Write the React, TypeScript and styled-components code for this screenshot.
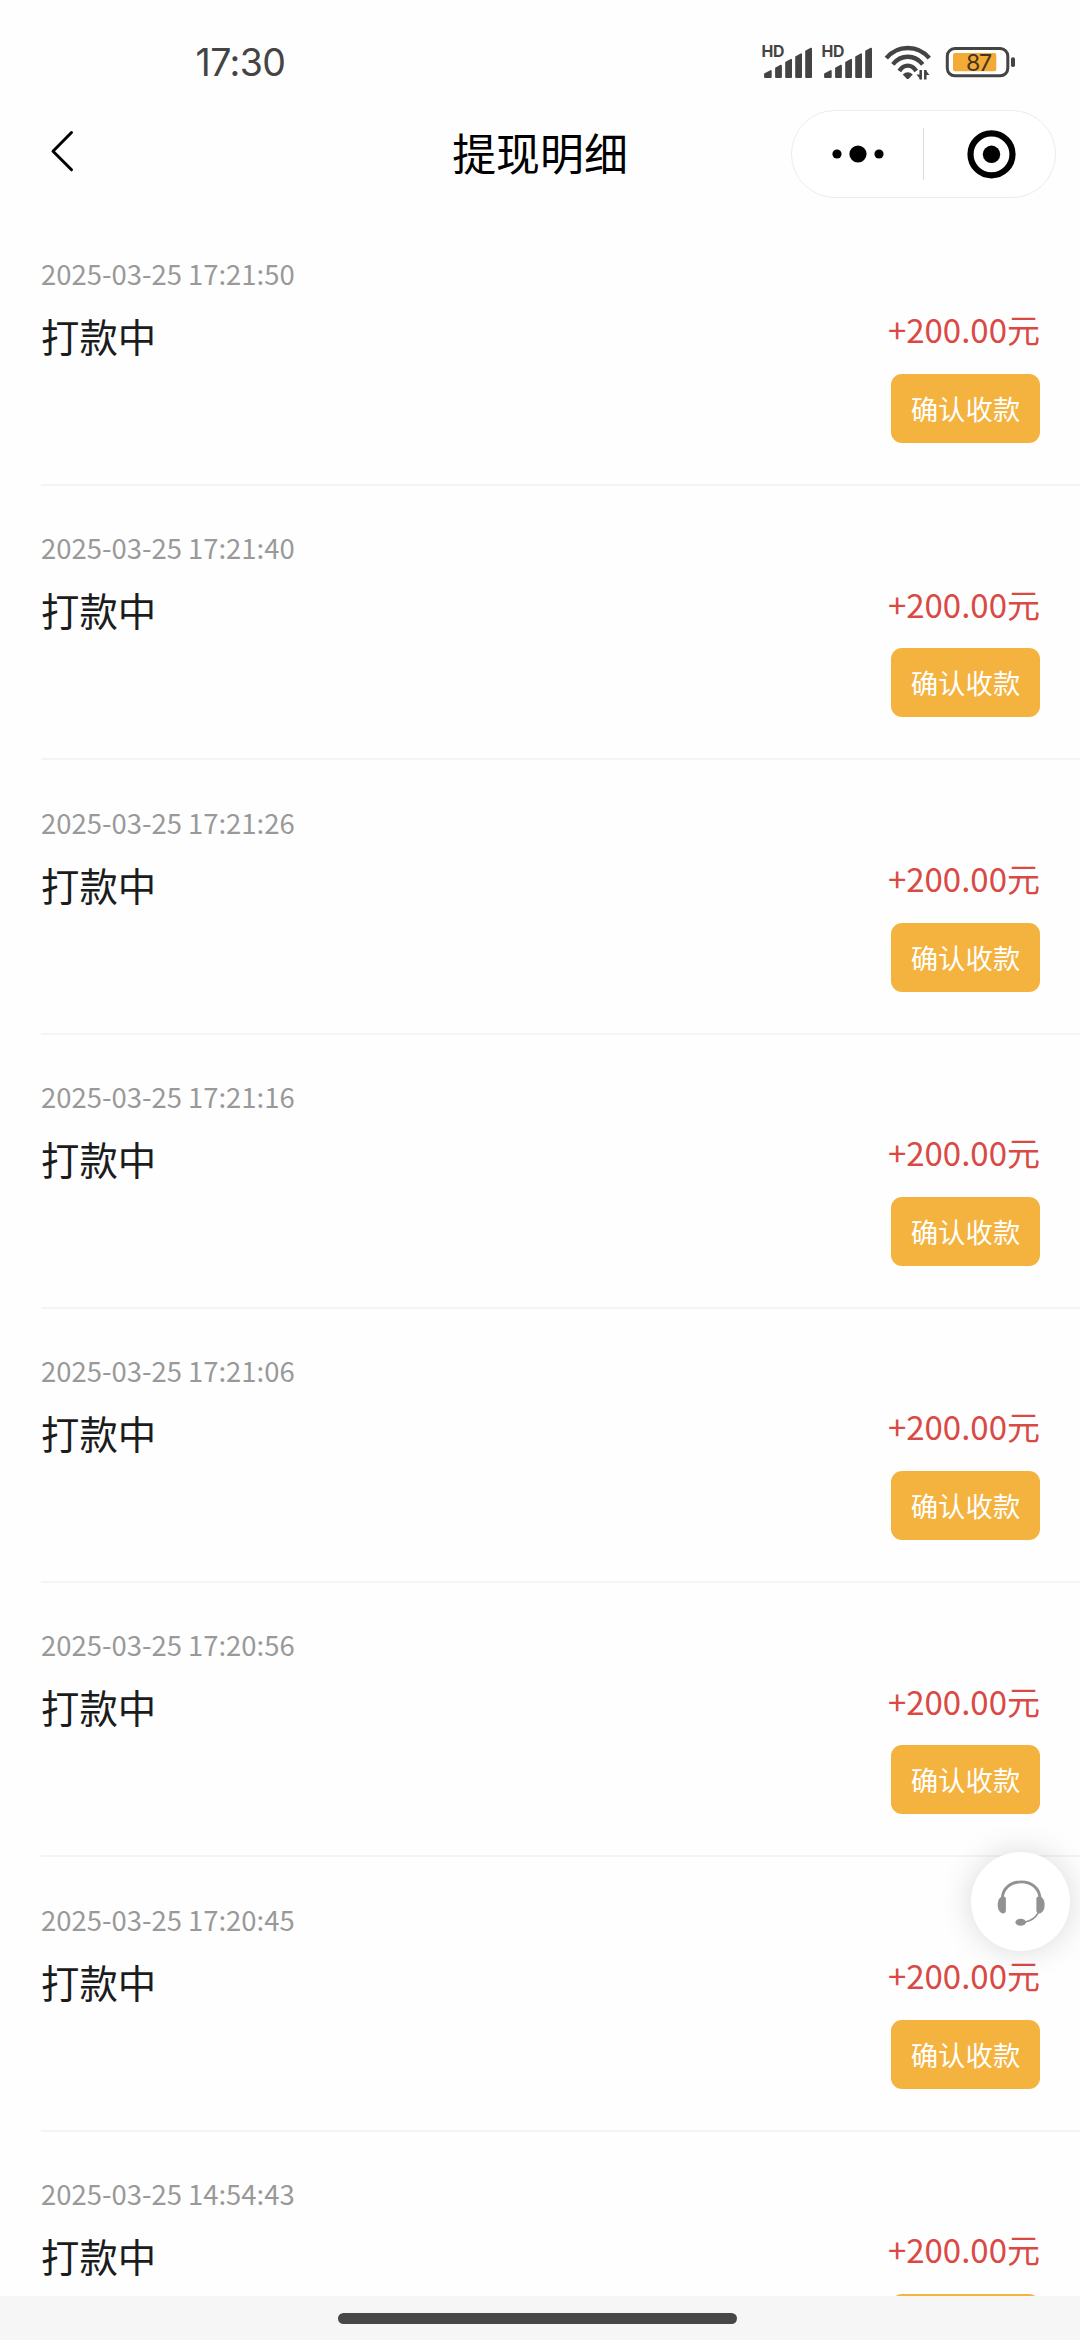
import React from 'react';
import styled, { createGlobalStyle } from 'styled-components';

const GlobalStyle = createGlobalStyle`
  * { box-sizing: border-box; }
  body {
    margin: 0;
    background: #fefefe;
    font-family: "Noto Sans CJK SC", "Noto Sans", sans-serif;
  }
`;

const Screen = styled.div`
  position: relative;
  display: flex;
  flex-direction: column;
  width: 1080px;
  height: 2340px;
  overflow: hidden;
  background: #fefefe;
`;

const Header = styled.header`
  flex: none;
  display: flex;
  flex-direction: column;
  height: 211.7px;
`;

const StatusBar = styled.div`
  display: flex;
  align-items: center;
  justify-content: space-between;
  height: 110px;
  padding: 14px 65px 0 195.5px;
`;

const Clock = styled.span`
  padding-top: 2px;
  font-family: Inter, sans-serif;
  font-size: 37.5px;
  line-height: 50px;
  letter-spacing: -0.6px;
  color: #444;
`;

const StatusIcons = styled.div`
  display: flex;
  align-items: center;
  height: 34px;
`;

const Signal = styled.div`
  position: relative;
  width: 60px;
  height: 34px;
`;

const SignalTag = styled.span`
  position: absolute;
  left: 0.5px;
  top: -1px;
  font-family: Inter, sans-serif;
  font-size: 15.8px;
  font-weight: 700;
  line-height: 16px;
  letter-spacing: -0.3px;
  color: #444;
`;

const WifiSlot = styled.div`
  width: 64px;
  height: 34px;
`;

const Battery = styled.div`
  position: relative;
  width: 70px;
  height: 34px;
`;

const BatteryLevel = styled.span`
  position: absolute;
  left: 8.5px;
  top: 4px;
  width: 50px;
  text-align: center;
  font-family: Inter, sans-serif;
  font-size: 23.2px;
  line-height: 28px;
  letter-spacing: -1.2px;
  color: #43361c;
`;

const NavBar = styled.nav`
  display: grid;
  grid-template-columns: 289px 1fr 289px;
  align-items: start;
  height: 88px;
`;

const BackButton = styled.button`
  display: flex;
  align-items: center;
  height: 81px;
  padding: 0 0 0 48px;
  border: 0;
  background: none;
`;

const Title = styled.h1`
  margin: 0;
  text-align: center;
  font-size: 43.9px;
  font-weight: 400;
  line-height: 84px;
  color: #000;
`;

const Capsule = styled.div`
  display: flex;
  align-items: center;
  width: 265px;
  height: 88px;
  border: 1px solid #ececec;
  border-radius: 44px;
  background: #fff;
`;

const CapsuleHalf = styled.div`
  flex: 1;
  display: flex;
  align-items: center;
  justify-content: center;
`;

const CapsuleDivider = styled.div`
  width: 1px;
  height: 52px;
  background: #dcdcdc;
`;

const List = styled.main`
  flex: 1;
  min-height: 0;
  overflow: hidden;
`;

const Row = styled.section`
  display: flex;
  justify-content: space-between;
  height: 274.286px;
  margin-left: 41px;
  padding-right: 40px;
  border-bottom: 2px solid #f4f4f4;
`;

const Info = styled.div`
  display: flex;
  flex-direction: column;
  gap: 14px;
  padding-top: 41.3px;
`;

const Time = styled.time`
  font-size: 27.45px;
  line-height: 40px;
  color: #999;
`;

const State = styled.span`
  font-size: 38.4px;
  line-height: 56px;
  color: #1c1c1c;
`;

const Payment = styled.div`
  display: flex;
  flex-direction: column;
  align-items: flex-end;
  gap: 20.7px;
  padding-top: 93.6px;
`;

const Amount = styled.span`
  font-size: 33px;
  line-height: 48px;
  white-space: nowrap;
  color: #d94a45;
`;

const ConfirmButton = styled.button`
  width: 149px;
  height: 69px;
  padding: 0;
  border: 0;
  border-radius: 11px;
  background: #f4b23e;
  font-family: inherit;
  font-size: 27.4px;
  line-height: 69px;
  color: #fff;
`;

const SupportButton = styled.button`
  position: absolute;
  left: 971px;
  top: 1852px;
  display: flex;
  align-items: center;
  justify-content: center;
  width: 99px;
  height: 99px;
  padding: 0;
  border: 0;
  border-radius: 50%;
  background: #fff;
  box-shadow: 0 0 32px rgba(0, 0, 0, 0.15);
`;

const GestureArea = styled.footer`
  flex: none;
  display: flex;
  justify-content: center;
  height: 44px;
  padding-top: 17px;
  background: #f6f6f6;
`;

const GestureBar = styled.div`
  width: 399px;
  height: 11px;
  margin-right: 6px;
  border-radius: 6px;
  background: #474747;
`;

const times = [
  '2025-03-25 17:21:50',
  '2025-03-25 17:21:40',
  '2025-03-25 17:21:26',
  '2025-03-25 17:21:16',
  '2025-03-25 17:21:06',
  '2025-03-25 17:20:56',
  '2025-03-25 17:20:45',
  '2025-03-25 14:54:43',
];

const SignalMeter = () => (
  <Signal>
    <SignalTag>HD</SignalTag>
    <svg width="60" height="34" viewBox="0 0 60 34" fill="#444" stroke="#444" strokeWidth="1.8" strokeLinejoin="round">
      <path d="M4 32V29L9.8 26V32Z" />
      <path d="M15 32V23.4L20 20.6V32Z" />
      <path d="M25.1 32V17.6L30.1 14.8V32Z" />
      <path d="M35.1 32V12L40.1 9.2V32Z" />
      <path d="M45.1 32V6.4L50.1 3.6V32Z" />
    </svg>
  </Signal>
);

const WifiIcon = () => (
  <svg width="54" height="36" viewBox="0 0 54 36" fill="none" stroke="#444" strokeWidth="4.3">
    <path d="M5.3 13.2C16.5 -.4 37 -.4 48.300 13.200" />
    <path d="M11.800 19.300C20 9.200 33.500 9.200 41.700 19.300" />
    <path d="M18.300 26C23 18.800 30.500 18.800 35.200 26" />
    <path d="M21.700 29.500Q26.700 25 31.800 29.500L28 33.400Q26.700 34.500 25.500 33.400Z" fill="#444" stroke="none" />
    <path d="M39.700 25V34.500M44.300 25V34.500" strokeWidth="2.500" />
    <path d="M35.500 29.500H39.700V34.800ZM44.300 24.700V30H48.500Z" fill="#444" stroke="none" />
  </svg>
);

const App = () => (
  <Screen>
    <GlobalStyle />
    <Header>
      <StatusBar>
        <Clock>17:30</Clock>
        <StatusIcons>
          <SignalMeter />
          <SignalMeter />
          <WifiSlot>
            <WifiIcon />
          </WifiSlot>
          <Battery>
            <svg width="72" height="34" viewBox="0 0 72 34">
              <rect x="2.300" y="3.500" width="60.500" height="27.300" rx="7.500" fill="#fff" stroke="#444" strokeWidth="3" />
              <rect x="8" y="8" width="43.300" height="18.300" rx="2" fill="#f3aa36" />
              <rect x="66" y="12.300" width="4" height="9.700" rx="1.800" fill="#444" />
            </svg>
            <BatteryLevel>87</BatteryLevel>
          </Battery>
        </StatusIcons>
      </StatusBar>
      <NavBar>
        <BackButton aria-label="返回">
          <svg width="28" height="46" viewBox="0 0 28 46" fill="none" stroke="#000" strokeWidth="3" strokeLinecap="round" strokeLinejoin="round">
            <path d="M23.500 4.500L5 23.200L23.500 41.800" />
          </svg>
        </BackButton>
        <Title>提现明细</Title>
        <Capsule>
          <CapsuleHalf>
            <svg width="52" height="18" viewBox="0 0 52 18">
              <circle cx="5" cy="9" r="4.600" />
              <circle cx="26" cy="9" r="8.600" />
              <circle cx="47" cy="9" r="4.600" />
            </svg>
          </CapsuleHalf>
          <CapsuleDivider />
          <CapsuleHalf>
            <svg width="52" height="50" viewBox="0 0 52 50">
              <circle cx="27.500" cy="25.300" r="21" fill="none" stroke="#000" strokeWidth="6.200" />
              <circle cx="27.500" cy="25.300" r="8.700" />
            </svg>
          </CapsuleHalf>
        </Capsule>
      </NavBar>
    </Header>
    <List>
      {times.map((time) => (
        <Row key={time}>
          <Info>
            <Time>{time}</Time>
            <State>打款中</State>
          </Info>
          <Payment>
            <Amount>+200.00元</Amount>
            <ConfirmButton>确认收款</ConfirmButton>
          </Payment>
        </Row>
      ))}
    </List>
    <SupportButton aria-label="客服">
      <svg width="50" height="50" viewBox="0 0 50 50" fill="none" stroke="#929292">
        <path d="M6.300 21C7 10.500 15 4.900 25.100 4.900S43.200 10.500 44 21" strokeWidth="2.900" />
        <path d="M5.500 19.800Q9.500 18.500 9.900 21.500V34Q9.500 37 6 36.300Q1.700 34.500 1.700 28T5.500 19.800Z" fill="#929292" stroke="none" />
        <path d="M44.800 19.800Q40.800 18.500 40.400 21.500V34Q40.800 37 44.300 36.300Q48.600 34.500 48.600 28T44.800 19.800Z" fill="#929292" stroke="none" />
        <path d="M42.500 35.500Q37.500 44 28.500 45" strokeWidth="1.500" />
        <ellipse cx="24.700" cy="45.200" rx="5.300" ry="3.500" fill="#929292" stroke="none" />
      </svg>
    </SupportButton>
    <GestureArea>
      <GestureBar />
    </GestureArea>
  </Screen>
);

export default App;
